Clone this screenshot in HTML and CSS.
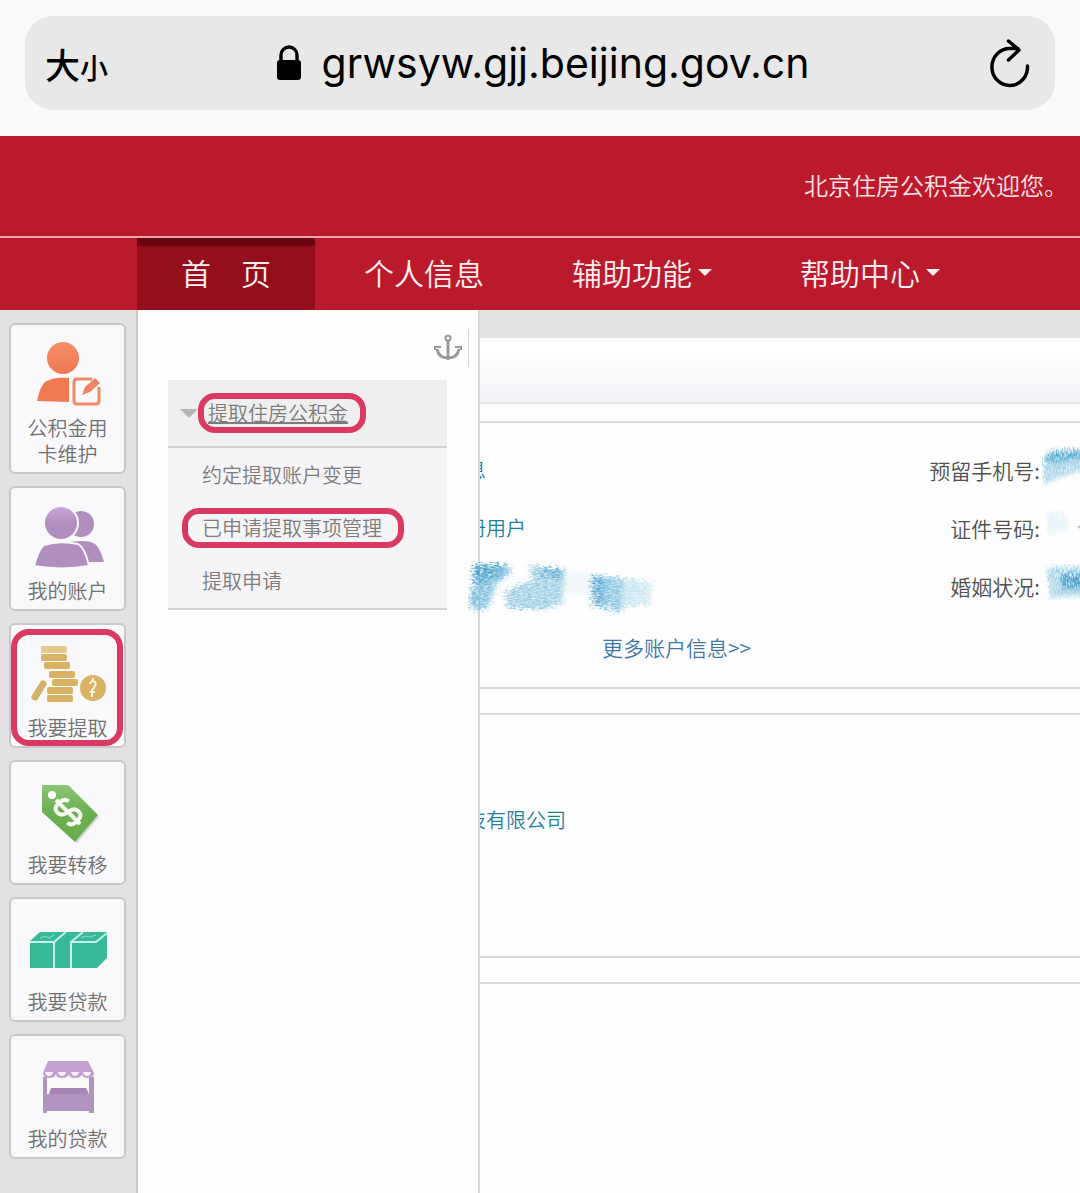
FILE: index.html
```html
<!DOCTYPE html>
<html lang="zh-CN">
  <head>
    <meta charset="UTF-8" />
    <meta name="viewport" content="width=device-width, initial-scale=1.0" />
    <title>北京住房公积金</title>
    <link rel="stylesheet" href="styles.css">
  </head>
  <body>
    <div class="browser-bar">
      <div class="address-bar">
        <button type="button" class="text-size">大<small>小</small></button>
        <button type="button" class="address">
          <svg class="lock" viewBox="0 0 26 36" aria-hidden="true">
            <path d="M5 17V10a8 8 0 0 1 16 0v7" fill="none" stroke="#000" stroke-width="3.4" />
            <rect x="1" y="15" width="24" height="20" rx="3" />
          </svg>
          <span>grwsyw.gjj.beijing.gov.cn</span>
        </button>
        <button type="button" class="reload" aria-label="刷新">
          <svg viewBox="0 0 42 50" aria-hidden="true">
            <path d="M38.500 28A17.800 18.500 0 1 1 21 10.500h8M19.500 3l10.500 9-10.500 10" />
          </svg>
        </button>
      </div>
    </div>

    <header class="header">
      <p>北京住房公积金欢迎您。</p>
    </header>

    <nav class="nav">
      <a href="#" class="active">首　页</a>
      <a href="#">个人信息</a>
      <a href="#" class="dropdown">辅助功能</a>
      <a href="#" class="dropdown">帮助中心</a>
    </nav>

    <div class="layout">
      <aside class="sidebar">
        <a href="#" class="tile">
          <svg viewBox="0 0 84 72" aria-hidden="true">
            <defs>
              <linearGradient id="orange" x1="0" y1="0" x2="0" y2="1">
                <stop offset="0" stop-color="#f58f6a" />
                <stop offset="1" stop-color="#ef7750" />
              </linearGradient>
            </defs>
            <circle cx="37" cy="15" r="16" fill="url(#orange)" />
            <path d="M11 58c2-9 4-15 8-19 5-4 16-5 24-4v24z" fill="#f27a52" />
            <path d="M66 36H51q-3 0-3 3v19q0 3 3 3h19q3 0 3-3V44" fill="none" stroke="#ef8a68" stroke-width="3" />
            <path d="M56 52l3-8 10-9 5 5-10 9z" fill="#ed8463" />
          </svg>
          <span>公积金用<br />卡维护</span>
        </a>
        <a href="#" class="tile">
          <svg viewBox="0 0 84 72" aria-hidden="true">
            <defs>
              <linearGradient id="purple" x1="0" y1="0" x2="0" y2="1">
                <stop offset="0" stop-color="#caa6d8" />
                <stop offset="0.5" stop-color="#b08fc0" />
              </linearGradient>
            </defs>
            <circle cx="55" cy="18" r="13" fill="#b08fbf" />
            <path d="M44 36q18-3 25 2 5 4 9 18H56z" fill="#b08fbf" />
            <circle cx="35" cy="17" r="17" fill="url(#purple)" stroke="#faf8fb" stroke-width="2" />
            <path d="M8 60q4-16 10-21 15-5 34-1 7 4 11 22-28 5-55 0z" fill="#b08fbf" stroke="#faf8fb" stroke-width="2" />
          </svg>
          <span>我的账户</span>
        </a>
        <a href="#" class="tile marked">
          <svg viewBox="0 0 84 72" aria-hidden="true">
            <g fill="#d9b264">
              <rect x="15" y="3" width="26" height="7" rx="2" fill="#e6c98a" />
              <rect x="15" y="11" width="26" height="7" rx="2" />
              <rect x="18" y="19" width="26" height="7" rx="2" />
              <rect x="23" y="28" width="26" height="7" rx="2" />
              <rect x="26" y="36" width="26" height="7" rx="2" />
              <rect x="21" y="44" width="26" height="7" rx="2" />
              <rect x="21" y="52" width="26" height="7" rx="2" />
              <circle cx="67" cy="45" r="13" />
            </g>
            <path d="M17 41L9 54" stroke="#d6b16b" stroke-width="7" stroke-linecap="round" />
            <path d="M64 41q1-3 3-3 4 1 2 5l-4 6h4M67 35v3M66 50v4" fill="none" stroke="#fff5dc" stroke-width="2" />
          </svg>
          <span>我要提取</span>
        </a>
        <a href="#" class="tile">
          <svg viewBox="0 0 84 72" aria-hidden="true">
            <defs>
              <linearGradient id="green" x1="0" y1="0" x2="0" y2="1">
                <stop offset="0" stop-color="#8bc573" />
                <stop offset="0.5" stop-color="#6aae50" />
              </linearGradient>
            </defs>
            <path d="M18 7h26l29 30-22 26-33-29z" fill="#d8d8d8" />
            <path d="M16 5h26l30 30-23 27-33-30z" fill="url(#green)" />
            <circle cx="26" cy="15" r="4" fill="#fff" />
            <g transform="rotate(-45 42 32)" fill="none" stroke="#f5fbf2" stroke-width="4">
              <path d="M50 25q-1-6-8-6-8 0-8 6t8 7q8 1 8 7t-8 6q-8 0-8-6M42 15v34" />
            </g>
          </svg>
          <span>我要转移</span>
        </a>
        <a href="#" class="tile">
          <svg viewBox="0 0 84 72" aria-hidden="true">
            <path d="M4 24l10-9h67v26l-10 10H4z" fill="#38ba98" />
            <path d="M4 25h24l12-10M28 25v26M45 51V25l12-10M45 25h25l11-9M70 25" fill="none" stroke="#c9f0e5" stroke-width="2" />
            <path d="M14 21l5-2 4 2 5-3M55 21l5-2 4 1 6-2" fill="none" stroke="#8fdcc8" stroke-width="1" />
          </svg>
          <span>我要贷款</span>
        </a>
        <a href="#" class="tile">
          <svg viewBox="0 0 84 72" aria-hidden="true">
            <path d="M17 23h4v17h42V23h5v36h-5v-2H21v2h-4z" fill="#b094bf" />
            <path d="M25 34h35l3 6H23z" fill="#a585b5" />
            <path d="M22 7h40l6 12q0 5-6 5t-6-4q-1 4-7 4t-6-4q-1 4-7 4t-6-4q-1 4-7 4t-6-5z" fill="#c4a0d2" />
            <path d="M19 18h8q-1 4-4 4t-4-4zM32 18h8q-1 4-4 4t-4-4zM45 18h8q-1 4-4 4t-4-4zM57 18h8q-1 4-4 4t-4-4z" fill="#faf3fb" />
          </svg>
          <span>我的贷款</span>
        </a>
      </aside>

      <main class="content">
        <div class="strip"></div>
        <div class="title-bar"></div>

        <section class="panel account">
          <div class="row">
            <span class="value">息</span>
            <span class="label">预留手机号:</span>
            <svg class="smudge-end" viewBox="0 0 38 44" aria-hidden="true">
              <defs>
                <filter id="grain" x="-5%" y="-5%" width="110%" height="110%">
                  <feTurbulence type="fractalNoise" baseFrequency="0.25 0.7" numOctaves="4" seed="4" result="noise" />
                  <feColorMatrix values="0 0 0 0 0  0 0 0 0 0  0 0 0 0 0  1.500 0 0 0 0" result="mask" />
                  <feGaussianBlur in="SourceGraphic" stdDeviation="2 1" />
                  <feDisplacementMap in2="noise" scale="14" xChannelSelector="R" yChannelSelector="A" />
                  <feComposite in2="mask" operator="in" />
                </filter>
                <filter id="grain-up" x="-5%" y="-5%" width="110%" height="110%">
                  <feTurbulence type="fractalNoise" baseFrequency="0.7 0.25" numOctaves="4" seed="7" result="noise" />
                  <feColorMatrix values="0 0 0 0 0  0 0 0 0 0  0 0 0 0 0  1.500 0 0 0 0" result="mask" />
                  <feGaussianBlur in="SourceGraphic" stdDeviation="1 2" />
                  <feDisplacementMap in2="noise" scale="10" xChannelSelector="A" yChannelSelector="R" />
                  <feComposite in2="mask" operator="in" />
                </filter>
              </defs>
              <g filter="url(#grain-up)">
                <path d="M1 15L7 5l35-3v22l-16 5-12 4L2 39z" fill="#a5d4e9" />
                <path d="M2 14L8 7l34-3v8l-30 6z" fill="#4fa9d3" />
              </g>
            </svg>
          </div>
          <div class="row">
            <span class="value">册用户</span>
            <span class="label">证件号码:</span>
            <svg class="smudge-end" viewBox="0 0 38 44" aria-hidden="true">
              <path d="M4 10l20-3 3 20-22 5z" fill="#e6f3f8" filter="url(#grain-up)" />
              <path d="M36 22l2 2" stroke="#bbb" stroke-width="2" />
            </svg>
          </div>
          <div class="row">
            <svg class="smudge" viewBox="0 0 190 56" aria-hidden="true">
              <g filter="url(#grain)">
                <path d="M5 3h36l3 9-14 9-4 10-4 12-5 6H4L1 36l4-12z" fill="#7fc0dd" />
                <path d="M5 4h30l-2 12-24 8z" fill="#4ba4ce" />
                <path d="M62 4l35 4-2 34-20 7-36-2-2-17 28-11z" fill="#9ccde3" />
                <path d="M72 6l25 3-3 9-20-2z" fill="#68b3d6" />
                <path d="M97 8l28 4v22l-28 2z" fill="#eef7fb" />
                <path d="M124 13l34 4 25 4-1 23-24 2-4 7-31-6z" fill="#c6e5f0" />
                <path d="M124 14l32 5-2 30-28-5z" fill="#86c4df" />
                <path d="M125 15l12 3-2 27-9-4z" fill="#4ba4ce" />
              </g>
            </svg>
            <span class="label">婚姻状况:</span>
            <svg class="smudge-end" viewBox="0 0 38 44" aria-hidden="true">
              <g filter="url(#grain-up)">
                <path d="M5 6l37-2v30l-34 2z" fill="#a5d4e9" />
                <path d="M18 12h24v16H20z" fill="#3f9fcc" />
              </g>
            </svg>
          </div>
          <a href="#" class="more">更多账户信息&gt;&gt;</a>
        </section>

        <section class="panel company">
          <span class="value">技有限公司</span>
        </section>

        <section class="panel last"></section>

        <div class="flyout">
          <div class="flyout-tools">
            <button type="button" aria-label="固定菜单">
              <svg viewBox="0 0 28 28" aria-hidden="true">
                <circle cx="14" cy="4" r="2.500" stroke-width="2" />
                <path d="M14 7v19M3 15c1 6 5 9 11 9s10-3 11-9" />
                <path d="M1 16v-3h6M27 16v-3h-6" stroke-width="2" />
              </svg>
            </button>
          </div>
          <div class="submenu">
            <div class="submenu-head">
              <a href="#" class="ring">提取住房公积金</a>
            </div>
            <ul>
              <li><a href="#">约定提取账户变更</a></li>
              <li><a href="#" class="ring wide">已申请提取事项管理</a></li>
              <li><a href="#">提取申请</a></li>
            </ul>
          </div>
        </div>
      </main>
    </div>
  </body>
</html>
```

FILE: styles.css
```css
* {
  box-sizing: border-box;
}
body {
  margin: 0;
  min-height: 100vh;
  display: flex;
  flex-direction: column;
  font-family: "Noto Sans CJK SC", sans-serif;
  font-size: 20px;
  font-weight: 350;
  line-height: 26px;
  color: #505050;
  background-color: #fefefe;
}
a {
  color: inherit;
  text-decoration: none;
}
button {
  padding: 0;
  border: none;
  background: none;
  color: #000;
  cursor: pointer;
}
svg {
  display: block;
}

/* Browser address bar */
.browser-bar {
  padding: 16px 25px 26px;
  background-color: #fafafa;
}
.address-bar {
  display: flex;
  align-items: center;
  justify-content: space-between;
  height: 94px;
  padding: 0 24px 0 20px;
  border-radius: 28px;
  background-color: #e8e8e8;
}
.text-size {
  font-family: "Noto Sans CJK SC", sans-serif;
  font-size: 35px;
  font-weight: 500;
}
.text-size small {
  font-size: 28px;
}
.address {
  display: flex;
  align-items: center;
  gap: 20px;
  margin-right: 12px;
  font-family: Inter, sans-serif;
  font-size: 41px;
  font-weight: 400;
}
.lock {
  width: 26px;
  height: 36px;
}
.reload svg {
  width: 42px;
  height: 50px;
  fill: none;
  stroke: #000;
  stroke-width: 3.5;
  stroke-linecap: round;
  stroke-linejoin: round;
}

/* Red header and navigation */
.header {
  display: flex;
  align-items: center;
  justify-content: flex-end;
  height: 102px;
  padding: 0 12px 3px 0;
  border-bottom: 2px solid #eba3ad;
  background-color: #bb1a2c;
}
.header p {
  margin: 0;
  font-size: 24px;
  color: #fbe3e6;
}
.nav {
  display: flex;
  height: 72px;
  padding-left: 137px;
  background-color: #bb1a2c;
}
.nav a {
  display: flex;
  align-items: center;
  padding: 0 44px 4px;
  font-size: 30px;
  color: #fff0f2;
}
.nav .active {
  margin-right: 5px;
  border-top: 8px solid #6b0510;
  padding-bottom: 12px;
  background-color: #940e1b;
}
.dropdown::after {
  content: "";
  margin-left: 6px;
  border: 7px solid transparent;
  border-top-color: #fff0f2;
  border-bottom: none;
}

.layout {
  display: flex;
  flex: 1;
}

/* Left tiles */
.sidebar {
  display: flex;
  flex-direction: column;
  gap: 12px;
  width: 138px;
  padding: 13px 10px 32px 9px;
  border-right: 2px solid #cbc9cd;
  background-color: #e3e1e4;
}
.tile {
  position: relative;
  display: flex;
  flex-direction: column;
  align-items: center;
  justify-content: flex-end;
  padding: 18px 0 5px;
  border: 2px solid #c9c7ca;
  border-radius: 6px;
  background-color: #f9f8fa;
  color: #707070;
  text-align: center;
}
.tile svg {
  width: 84px;
  height: 72px;
  overflow: visible;
}
.marked::after {
  content: "";
  position: absolute;
  inset: 4px 1px 0 0;
  border: 6px solid #da3a61;
  border-radius: 18px;
}

/* Page content */
.content {
  position: relative;
  flex: 1;
  overflow: hidden;
}
.strip {
  height: 28px;
  background-color: #e3e3e3;
}
.title-bar {
  height: 66px;
  margin-bottom: 17px;
  border-bottom: 2px solid #e6e5ea;
  background: linear-gradient(#fff 20%, #f3f3f8);
}
.panel {
  margin-bottom: 24px;
  padding-left: 328px;
  border-top: 2px solid #d9d8dc;
  border-bottom: 2px solid #d9d8dc;
}
.account {
  padding-top: 18px;
  padding-bottom: 27px;
}
.row {
  position: relative;
  display: flex;
  align-items: center;
  height: 58px;
}
.value {
  color: #1f7f9f;
}
.label {
  margin-left: auto;
  margin-right: 40px;
  font-size: 21px;
}
.smudge {
  position: absolute;
  left: 2px;
  top: 4px;
  z-index: 2;
  width: 190px;
  height: 56px;
}
.smudge-end {
  position: absolute;
  right: 0;
  top: 5px;
  width: 38px;
  height: 44px;
}
.more {
  display: block;
  margin: 19px 0 0 136px;
  font-size: 21px;
  color: #3f76a8;
}
.company {
  padding-top: 92px;
  padding-bottom: 123px;
}
.last {
  margin-bottom: 0;
  border-bottom: none;
}

/* Menu that slides over the content */
.flyout {
  position: absolute;
  top: 0;
  bottom: 0;
  left: 0;
  width: 342px;
  padding: 19px 9px 0 30px;
  border-right: 2px solid #d9d8dc;
  background-color: #fefefe;
}
.flyout-tools {
  display: flex;
  align-items: center;
  justify-content: flex-end;
  height: 38px;
  padding-right: 6px;
  border-right: 1px solid #d5d5d5;
}
.flyout-tools svg {
  width: 28px;
  height: 28px;
  fill: none;
  stroke: #999;
  stroke-width: 3;
}
.submenu {
  margin: 13px 22px 0 0;
  border-bottom: 2px solid #d3d1d5;
  background-color: #f5f4f6;
  color: #7c7c7c;
}
.submenu-head {
  display: flex;
  align-items: center;
  height: 68px;
  padding-left: 12px;
  border-bottom: 2px solid #d3d1d5;
  background-color: #f0eff0;
}
.submenu-head::before {
  content: "";
  border: 9px solid transparent;
  border-top-color: #b5b5b5;
  border-bottom: none;
}
.submenu-head a {
  margin-left: 10px;
  text-decoration: underline;
}
.submenu ul {
  margin: 0;
  padding: 0 0 1px 34px;
  list-style: none;
}
.submenu li {
  display: flex;
  align-items: center;
  height: 53px;
}
.ring {
  position: relative;
}
.ring::after {
  content: "";
  position: absolute;
  inset: -7px -18px -7px -10px;
  border: 6px solid #da3a61;
  border-radius: 17px;
}
.wide::after {
  left: -20px;
  right: -22px;
}
```
